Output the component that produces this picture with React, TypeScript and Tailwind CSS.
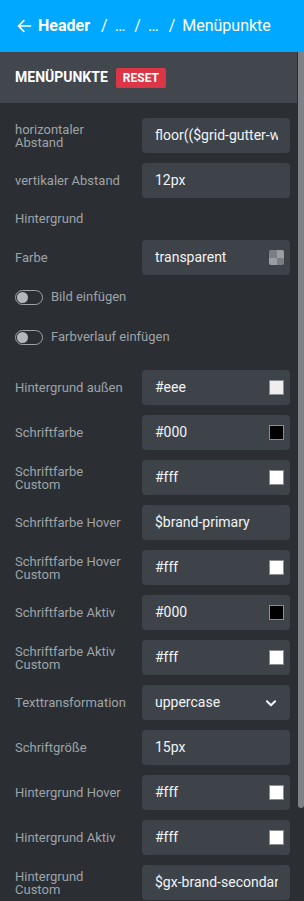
const font = { fontFamily: "Roboto, 'Liberation Sans', sans-serif" };

type Field =
  | { kind: "input"; label: string; value: string; swatch?: string; checker?: boolean }
  | { kind: "select"; label: string; value: string };

function Swatch({ color, checker }: { color?: string; checker?: boolean }) {
  if (checker) {
    return (
      <div className="grid grid-cols-2 w-[15px] h-[15px] rounded-[2px] overflow-hidden shrink-0">
        <div className="bg-[#7b7f84]" />
        <div className="bg-[#9a9da1]" />
        <div className="bg-[#9a9da1]" />
        <div className="bg-[#7b7f84]" />
      </div>
    );
  }
  return (
    <div
      className="w-[15px] h-[15px] border border-[#8a8e93] shrink-0"
      style={{ backgroundColor: color }}
    />
  );
}

function Row({ field }: { field: Field }) {
  const hasIcon = field.kind === "select" || !!(field.swatch || field.checker);
  return (
    <div className="flex items-center h-[35px]">
      <div className="w-[127px] pr-[12px] text-[13px] leading-[13px] text-[#9ea3a8]">{field.label}</div>
      <div
        className={
          "flex items-center w-[148px] h-[35px] rounded-[4px] bg-[#3e434a] pl-[13px] " +
          (hasIcon ? "pr-[6px]" : "pr-[12px]")
        }
      >
        <span className="flex-1 overflow-hidden whitespace-nowrap text-[14px] text-[#f2f3f4]">
          {field.value}
        </span>
        {field.kind === "input" && (field.swatch || field.checker) && (
          <Swatch color={field.swatch} checker={field.checker} />
        )}
        {field.kind === "select" && (
          <svg width="14" height="14" viewBox="0 0 24 24" className="mr-[6px] shrink-0" fill="none" stroke="#f2f3f4" strokeWidth="3.5" strokeLinecap="round" strokeLinejoin="round">
            <path d="M5 9l7 7 7-7" />
          </svg>
        )}
      </div>
    </div>
  );
}

function Toggle({ label }: { label: string }) {
  return (
    <div className="flex items-center h-[20px]">
      <div className="flex items-center w-[28px] h-[15px] rounded-full border border-[#9ea3a8] pl-[1px]">
        <div className="w-[11px] h-[11px] rounded-full bg-[#b4b8bd]" />
      </div>
      <span className="ml-[8px] text-[13px] text-[#9ea3a8]">{label}</span>
    </div>
  );
}

const lower: Field[] = [
  { kind: "input", label: "Hintergrund außen", value: "#eee", swatch: "#eeeeee" },
  { kind: "input", label: "Schriftfarbe", value: "#000", swatch: "#000000" },
  { kind: "input", label: "Schriftfarbe Custom", value: "#fff", swatch: "#ffffff" },
  { kind: "input", label: "Schriftfarbe Hover", value: "$brand-primary" },
  { kind: "input", label: "Schriftfarbe Hover Custom", value: "#fff", swatch: "#ffffff" },
  { kind: "input", label: "Schriftfarbe Aktiv", value: "#000", swatch: "#000000" },
  { kind: "input", label: "Schriftfarbe Aktiv Custom", value: "#fff", swatch: "#ffffff" },
  { kind: "select", label: "Texttransformation", value: "uppercase" },
  { kind: "input", label: "Schriftgröße", value: "15px" },
  { kind: "input", label: "Hintergrund Hover", value: "#fff", swatch: "#ffffff" },
  { kind: "input", label: "Hintergrund Aktiv", value: "#fff", swatch: "#ffffff" },
  { kind: "input", label: "Hintergrund Custom", value: "$gx-brand-secondary" },
];

export default function App() {
  return (
    <div style={font} className="w-[304px] h-[901px] overflow-hidden bg-[#2b2f33] flex flex-col">
      <div className="h-[52px] shrink-0 bg-[#00a8ff] flex items-center pl-[16px] text-white text-[16px]">
        <svg width="17" height="16" viewBox="0 0 24 24" fill="none" stroke="white" strokeWidth="2.6" strokeLinecap="round" strokeLinejoin="round">
          <path d="M21 12H3M11 4l-8 8 8 8" />
        </svg>
        <span className="ml-[5px] font-bold">Header</span>
        <span className="ml-[11px]">/</span>
        <span className="ml-[7px]">…</span>
        <span className="ml-[9px]">/</span>
        <span className="ml-[7px]">…</span>
        <span className="ml-[10px]">/</span>
        <span className="ml-[7px]">Menüpunkte</span>
      </div>

      <div className="flex flex-1 min-h-0">
        <div className="w-[297px] flex flex-col">
          <div className="h-[51px] bg-[#42474e] flex items-center pl-[15px]">
            <span className="text-[14px] font-bold text-white">MENÜPUNKTE</span>
            <span className="ml-[8px] h-[20px] px-[7px] flex items-center rounded-[2px] bg-[#dc3545] text-white text-[12px] font-bold">
              RESET
            </span>
          </div>

          <div className="flex flex-col pl-[15px] pt-[15px]">
            <div className="flex flex-col gap-[10px]">
              <Row field={{ kind: "input", label: "horizontaler Abstand", value: "floor(($grid-gutter-width" }} />
              <Row field={{ kind: "input", label: "vertikaler Abstand", value: "12px" }} />
              <div className="h-[22px] flex items-center text-[13px] text-[#9ea3a8]">Hintergrund</div>
              <Row field={{ kind: "input", label: "Farbe", value: "transparent", checker: true }} />
            </div>
            <div className="mt-[12px]">
              <Toggle label="Bild einfügen" />
            </div>
            <div className="mt-[20px]">
              <Toggle label="Farbverlauf einfügen" />
            </div>
            <div className="mt-[23px] flex flex-col gap-[10px]">
              {lower.map((f) => (
                <Row key={f.label} field={f} />
              ))}
            </div>
          </div>
        </div>
        <div className="w-[7px] bg-[#2b2f33] flex justify-end">
          <div className="w-[6px] h-[756px] rounded-b-[3px] bg-[#7e8286]" />
        </div>
      </div>
    </div>
  );
}
